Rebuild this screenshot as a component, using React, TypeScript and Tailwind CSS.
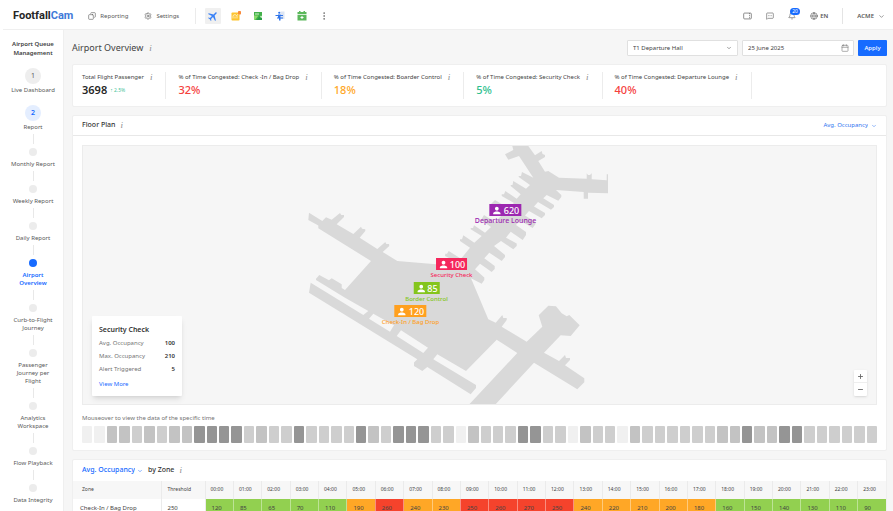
import React from "react";
import {
    Bell,
    Calendar,
    ChevronDown,
    Copy,
    Globe,
    MessageSquareMore,
    Minus,
    MoreVertical,
    Plus,
    Settings,
} from "lucide-react";
import { MdLocalAirport, MdPerson } from "react-icons/md";

const steps = [
    { label: "Monthly Report", width: "w-[60px]" },
    { label: "Weekly Report", width: "w-[60px]" },
    { label: "Daily Report", width: "w-[60px]" },
    { label: "Airport Overview", width: "w-[36px]" },
    { label: "Curb-to-Flight Journey", width: "w-[48px]" },
    { label: "Passenger Journey per Flight", width: "w-[36px]" },
    { label: "Analytics Workspace", width: "w-[44px]" },
    { label: "Flow Playback", width: "w-[60px]" },
    { label: "Data Integrity", width: "w-[60px]" },
];

const stats = [
    { label: "Total Flight Passenger", value: "3698", color: "text-[#262626] font-semibold", change: "2.5%" },
    { label: "% of Time Congested: Check -In / Bag Drop", value: "32%", color: "text-[#f5413d] font-medium" },
    { label: "% of Time Congested: Boarder Control", value: "18%", color: "text-[#ffa726] font-medium" },
    { label: "% of Time Congested: Security Check", value: "5%", color: "text-[#2fbf8f] font-medium" },
    { label: "% of Time Congested: Departure Lounge", value: "40%", color: "text-[#f5413d] font-medium" },
];

const slots = "aabbcbcbbddddcbccdccccdbcdddccabcccddccabccabccccccbbdbbddcccccc".split("");

const slotColor: Record<string, string> = {
    a: "bg-[#f0f0f0]",
    b: "bg-[#c3c3c3]",
    c: "bg-[#cecece]",
    d: "bg-[#959595]",
};

const occupancy = [
    120, 85, 65, 70, 110, 190, 260, 240, 230, 250, 260, 270, 250, 240, 220, 210, 200, 180, 160, 150, 140, 130, 110, 90,
];

function cellColor(value: number) {
    if (value >= 250) return "bg-[#f5432c]";
    if (value >= 180) return "bg-[#ffa726]";
    return "bg-[#92d050]";
}

function Info() {
    return <span className="font-['Liberation_Serif',serif] italic text-[9px] leading-none text-[#8c8c8c]">i</span>;
}

function TopBar() {
    return (
        <header className="ml-[3px] flex h-[30px] shrink-0 items-center border-b border-[#efefef] bg-white pl-[10px] pr-2 pt-[3px] text-[6px] text-[#595959]">
            <a href="#" className="font-[Roboto,sans-serif] text-[11px] font-bold text-[#262626]">
                Footfall<span className="text-[#3f7ad8]">Cam</span>
            </a>
            <nav className="flex items-center">
                <a href="#" className="ml-[15px] flex items-center gap-1">
                    <Copy className="size-2 -scale-x-100" strokeWidth={1.8} />
                    Reporting
                </a>
                <a href="#" className="ml-4 flex items-center gap-1">
                    <Settings className="size-2" strokeWidth={1.8} />
                    Settings
                </a>
            </nav>
            <div className="ml-4 h-4 w-px bg-[#ebebeb]" />
            <div className="ml-[9px] flex items-center gap-[12px]">
                <button aria-label="Airport" className="-mr-[2px] flex size-4 items-center justify-center rounded-[1px] bg-[#f0f0f0]">
                    <MdLocalAirport className="size-3 rotate-45 text-[#3b82f6]" />
                </button>
                <button aria-label="Analytics">
                    <svg viewBox="0 0 20 20" className="size-[10px]">
                        <rect x="1" y="3" width="16" height="16" rx="1.5" fill="#fdc42f" />
                        <path d="M4 15V9m4 6v-4m4 4V9M4 9l4-2 3 2 4-3" fill="none" stroke="#fff" strokeWidth="1.3" />
                        <rect x="14" y="0" width="6" height="7" rx="1.5" fill="#f98b3c" />
                    </svg>
                </button>
                <button aria-label="Map">
                    <svg viewBox="0 0 20 20" className="size-[10px]">
                        <path d="M2 2h16v16H2z" fill="#43b04b" />
                        <path d="M4 5h8v2H4z" fill="#d6f4cd" />
                        <path d="M2 9h9l-7 9H2z" fill="#8bdc6c" />
                        <path d="m7 18 6-7 5 4v3z" fill="#279e46" />
                        <path d="m14 12 2-3 2 2v3z" fill="#d6f4cd" />
                    </svg>
                </button>
                <button aria-label="Queue">
                    <svg viewBox="0 0 20 20" className="size-[10px]">
                        <path d="M11 1h8v15h-8z" fill="#dde5f3" />
                        <circle cx="8.500" cy="3.500" r="2.200" fill="#2f74ea" />
                        <path d="M1 8h5V7h5l1 1h4v2h-5v3h5v2h-5v4H8v-4H4v-2h2v-3H1z" fill="#2f74ea" />
                    </svg>
                </button>
                <button aria-label="Calendar">
                    <svg viewBox="0 0 20 20" className="size-[10px]">
                        <path d="M4 0h3v2h6V0h3v2h3v4H1V2h3zM1 7.500h18V19H1z" fill="#5cb85c" />
                        <path d="M9 10h2v2h2v2h-2v2H9v-2H7v-2h2z" fill="#fff" />
                    </svg>
                </button>
                <button aria-label="More">
                    <MoreVertical className="size-[10px]" strokeWidth={1.5} />
                </button>
            </div>
            <div className="ml-auto flex items-center gap-[14px]">
                <button aria-label="Layout">
                    <svg viewBox="0 0 20 16" className="h-2 w-[9px]" fill="none" stroke="currentColor" strokeWidth="1.500">
                        <rect x="1.500" y="1.500" width="17" height="13" rx="2" />
                        <path d="M14.500 1.500v13" strokeDasharray="2.500 2" />
                    </svg>
                </button>
                <button aria-label="Messages">
                    <MessageSquareMore className="size-2" strokeWidth={1.8} />
                </button>
                <button aria-label="Notifications" className="relative">
                    <Bell className="size-2" strokeWidth={1.8} />
                    <span className="absolute -top-1 left-[2px] rounded-full bg-[#176bff] px-[2px] text-[5px] leading-[7px] text-white">
                        20
                    </span>
                </button>
                <button className="flex items-center gap-[2px] font-semibold">
                    <Globe className="size-2" strokeWidth={1.8} />
                    EN
                </button>
                <div className="h-4 w-px bg-[#e4e4e4]" />
                <button className="flex items-center gap-1 font-semibold">
                    ACME
                    <ChevronDown className="size-[7px]" />
                </button>
            </div>
        </header>
    );
}

function Sidebar() {
    return (
        <aside className="w-[64px] shrink-0 border-r border-[#efefef] bg-white pl-[3px] pt-[10px] text-center text-[6px] leading-[8px] text-[#595959]">
            <h2 className="mx-auto w-[52px] font-semibold leading-[9px] text-[#404040]">Airport Queue Management</h2>
            <a href="#" className="mt-[10px] flex flex-col items-center gap-[2px] whitespace-nowrap">
                <span className="flex size-4 items-center justify-center rounded-full bg-[#eeeeee] text-[7px]">1</span>
                Live Dashboard
            </a>
            <a href="#" className="mt-[11px] flex flex-col items-center gap-[2px]">
                <span className="flex size-4 items-center justify-center rounded-full bg-[#e4eeff] text-[7px] font-semibold text-[#176bff]">
                    2
                </span>
                Report
            </a>
            {steps.map(({ label, width }) => {
                const active = label === "Airport Overview";
                return (
                    <a
                        key={label}
                        href="#"
                        className={`flex flex-col items-center pt-[3px] ${active ? "font-semibold text-[#176bff]" : ""}`}
                    >
                        <span className="h-[10px] w-px bg-[#e8e8e8]" />
                        <span className={`my-1 size-2 rounded-full ${active ? "bg-[#176bff]" : "bg-[#ececec]"}`} />
                        <span className={width}>{label}</span>
                    </a>
                );
            })}
        </aside>
    );
}

function Filters() {
    return (
        <div className="flex items-center">
            <h1 className="flex items-center gap-[6px] text-[9px] text-[#434343]">
                Airport Overview <Info />
            </h1>
            <div className="ml-auto flex items-center gap-1 text-[6px] text-[#434343]">
                <label className="relative flex items-center">
                    <select
                        aria-label="Hall"
                        className="h-4 w-[111px] appearance-none rounded-[1px] border border-[#e0e0e0] bg-white px-[5px] leading-none"
                    >
                        <option>T1 Departure Hall</option>
                    </select>
                    <ChevronDown className="pointer-events-none absolute right-[6px] size-[6px]" />
                </label>
                <label className="relative flex items-center">
                    <input
                        aria-label="Date"
                        type="text"
                        defaultValue="25 June 2025"
                        className="h-4 w-[112px] rounded-[1px] border border-[#e0e0e0] bg-white px-[5px]"
                    />
                    <Calendar className="pointer-events-none absolute right-[5px] size-2 text-[#7a7a7a]" strokeWidth={1.8} />
                </label>
                <button className="h-4 w-[29px] rounded-[1px] bg-[#176bff] font-medium text-white">Apply</button>
            </div>
        </div>
    );
}

function StatsCard() {
    return (
        <section className="flex rounded-[2px] border border-[#efefef] bg-white px-[9px] py-[7px]">
            {stats.map((stat) => (
                <div key={stat.label} className="mr-3 h-[27px] border-r border-[#ececec] pr-[13px]">
                    <div className="flex items-center gap-[6px] whitespace-nowrap text-[6px] leading-[10px] text-[#434343]">
                        {stat.label} <Info />
                    </div>
                    <div className={`flex items-center gap-[3px] text-[11px] leading-[16px] ${stat.color}`}>
                        {stat.value}
                        {stat.change && <span className="text-[5px] font-normal text-[#45c49a]">↑ {stat.change}</span>}
                    </div>
                </div>
            ))}
        </section>
    );
}

function Terminal() {
    return (
        <svg viewBox="305 145 350 260" className="h-[260px] w-[350px]" fill="#d9d9d9">
            <path
                fillRule="evenodd"
                d="M309 211.700 322.300 220 326 216.300 331.700 218.700 340 212 341.300 214H344V216L336.700 223.300 353.300 233 361 225.700 362 227.700 365.300 228.300V230L359.700 236.700 377.300 248 385.300 241 386.300 243H389L389.300 245 382.700 251 397.300 260 436 263.300 453 259 445 255 445.300 252.700H447L448.700 250 461 257.700 470 246.700 460 240V238.300H462L463.300 234.300 474.300 241.700 481.700 235 470.700 228.300V227H473L474 224.300 485 231.700 491 226 481 219 484 214 495 221 505 211 491 203 495 199 508 207 514 202 501.700 195V193.300H504L505.300 190 516.700 197.700 520.700 193.300 510.700 185V184H512.500L513.300 180 526 187.700 530 184 518.700 176V175H521L522 171 533.300 176.700 519 155 508.300 158.700 505 153.300 513.300 149 512.300 145H528.300L535 154.300 541.700 150 542.500 153 545 154V156L538.300 160 545 170.700 548.300 170 559 176.700 586.700 177.700V172.300L588 174H590L591.700 172.300V178.300L606.700 179.300V173.300H608V192.300L588 191.700V197.700H583.700V191L556 189 561.300 194V196L558.300 199.700 546.700 194 543.300 197.300 554 204V206L551 208.700 538 201 534 205.500 545 212V214L541.700 217.300 529 210 525 214.500 535.500 221V223L532.700 227 520 219.500 516 224 526 231V234L522.700 239 510.700 230.700 506 236.700 516.700 242.500V245L513.300 248.300 501 240 494 245 505 254V256L501.700 260 489.300 251.700 484.300 257.300 494.700 265V268L491.700 271 480 262.700 475 268.300 484.300 276.500V279L481.700 282.700 471 277.300 488.300 318.300 495.700 321.700 502.300 314 503.300 317H506.700V319L501.700 325.700 526.700 340.700 542.300 325.700 538.700 314.300 548.300 304.700 556 305.300 561.700 312.300 566.700 315.300 569.300 314 579.700 324.300 570.700 335 560.700 334.300 544 351.700 559 360 565 354 566 357H570V359L565 364.300 584.300 377.300V381.300L577.300 388.300 534 361.700 494 405H467.700L517.300 352 496.700 338.700 466 370 437.300 353.300 433.300 358.300 476 384V387L470.700 393.300 427.300 366 422.300 370 414 365V361.500L417.300 358.300 309 291.700 310.700 281.700 363.300 314 368.300 310 345 296.700 316 279V277.700L319.300 274 329 279.300 331.700 277.300 341.700 283.300V287L345 289 371 260 318.300 227.300V224.500L308.300 219ZM373.300 312.700 369 317.700 390 330.700 394 324.300ZM401 329.300 396.700 335 423.300 352 428 346.700Z"
            />
        </svg>
    );
}

type PinProps = { className: string; bg: string; text: string; count: number; label: string };

function Pin({ className, bg, text, count, label }: PinProps) {
    return (
        <div className={`absolute flex -translate-x-1/2 flex-col items-center whitespace-nowrap font-medium ${className}`}>
            <span className={`flex h-3 items-center gap-[1px] px-[2px] text-[9px] leading-none text-white ${bg}`}>
                <MdPerson className="size-[11px]" />
                {count}
            </span>
            <span className={`leading-[10px] ${text}`}>{label}</span>
        </div>
    );
}

function FloorPlan() {
    return (
        <section className="rounded-[2px] border border-[#efefef] bg-white">
            <div className="flex h-5 items-center justify-between border-b border-[#e8e8e8] px-[9px]">
                <h2 className="flex items-center gap-[5px] text-[7px] font-medium text-[#333333]">
                    Floor Plan <Info />
                </h2>
                <label className="flex items-center gap-[3px] text-[6px] text-[#2f74f0]">
                    <select aria-label="Metric" className="field-sizing-content appearance-none">
                        <option>Avg. Occupancy</option>
                    </select>
                    <ChevronDown className="size-[6px]" />
                </label>
            </div>
            <div className="px-[9px] pb-[7px] pt-[9px]">
                <div className="relative flex h-[260px] justify-center overflow-hidden border border-[#ececec] bg-[#f6f6f6]">
                    <div className="relative w-[350px] shrink-0">
                        <Terminal />
                        <Pin className="left-[201px] top-[58px] text-[7px]" bg="bg-[#9c27b0]" text="text-[#9c27b0]" count={620} label="Departure Lounge" />
                        <Pin className="left-[147px] top-[112px] text-[6px]" bg="bg-[#f5265c]" text="text-[#f5265c]" count={100} label="Security Check" />
                        <Pin className="left-[122px] top-[136px] text-[6px]" bg="bg-[#84c51c]" text="text-[#84c51c]" count={85} label="Border Control" />
                        <Pin className="left-[106px] top-[159px] text-[6px]" bg="bg-[#ffa01f]" text="text-[#ffa01f]" count={120} label="Check-In / Bag Drop" />
                    </div>
                    <div className="absolute bottom-2 left-[9px] w-[90px] rounded-[1px] bg-white px-[7px] pb-[5px] pt-[7px] text-[6px] leading-[13px] text-[#737373] shadow-md">
                        <h3 className="text-[7px] font-semibold text-[#333333]">Security Check</h3>
                        <dl className="mt-[1px]">
                            <div className="flex justify-between">
                                <dt>Avg. Occupancy</dt>
                                <dd className="font-semibold text-[#333333]">100</dd>
                            </div>
                            <div className="flex justify-between">
                                <dt>Max. Occupancy</dt>
                                <dd className="font-semibold text-[#333333]">210</dd>
                            </div>
                            <div className="flex justify-between">
                                <dt>Alert Triggered</dt>
                                <dd className="font-semibold text-[#333333]">5</dd>
                            </div>
                        </dl>
                        <a href="#" className="mt-[2px] block text-[#176bff]">
                            View More
                        </a>
                    </div>
                    <div className="absolute bottom-2 right-[9px] flex w-[13px] flex-col divide-y divide-[#eeeeee] rounded-[1px] bg-white text-[#666666] shadow">
                        <button aria-label="Zoom in" className="flex h-[13px] items-center justify-center">
                            <Plus className="size-[7px]" strokeWidth={3} />
                        </button>
                        <button aria-label="Zoom out" className="flex h-[13px] items-center justify-center">
                            <Minus className="size-[7px]" strokeWidth={3} />
                        </button>
                    </div>
                </div>
                <p className="mt-2 text-[6px] leading-[10px] text-[#737373]">Mouseover to view the data of the specific time</p>
                <div className="mt-[3px] flex gap-[2px]">
                    {slots.map((slot, i) => (
                        <div key={i} className={`h-[17px] flex-1 rounded-[1px] ${slotColor[slot]}`} />
                    ))}
                </div>
            </div>
        </section>
    );
}

function ZoneTable() {
    return (
        <section className="shrink-0 rounded-[2px] border border-[#efefef] bg-white">
            <div className="flex h-[21px] items-center gap-[5px] px-[9px] text-[7px] font-medium text-[#333333]">
                <label className="flex items-center gap-[2px] text-[#176bff]">
                    <select aria-label="Table metric" className="field-sizing-content appearance-none">
                        <option>Avg. Occupancy</option>
                    </select>
                    <ChevronDown className="size-[6px]" />
                </label>
                by Zone <Info />
            </div>
            <table className="w-full table-fixed border-collapse text-left text-[6px] text-[#434343]">
                <thead>
                    <tr className="h-[18px] bg-[#f7f7f7] text-[5px]">
                        <th className="w-[88px] border-r border-[#ebebeb] pl-[9px] font-normal">Zone</th>
                        <th className="w-[44px] border-r border-[#ebebeb] pl-[6px] font-normal">Threshold</th>
                        {occupancy.map((_, hour) => (
                            <th key={hour} className="border-r border-[#ebebeb] pl-[5px] font-normal last:border-r-0">
                                {String(hour).padStart(2, "0")}:00
                            </th>
                        ))}
                    </tr>
                </thead>
                <tbody>
                    <tr className="h-[18px]">
                        <td className="border-r border-[#ebebeb] pl-[7px]">Check-In / Bag Drop</td>
                        <td className="border-r border-[#ebebeb] pl-[6px]">250</td>
                        {occupancy.map((value, hour) => (
                            <td key={hour} className={`border-r border-white/40 pl-[6px] last:border-r-0 ${cellColor(value)}`}>
                                {value}
                            </td>
                        ))}
                    </tr>
                </tbody>
            </table>
        </section>
    );
}

const App: React.FC = () => {
    return (
        <div className="flex h-screen flex-col overflow-hidden bg-white font-['Noto_Sans','Open_Sans',sans-serif]">
            <TopBar />
            <div className="flex min-h-0 flex-1">
                <Sidebar />
                <main className="flex min-w-0 flex-1 flex-col gap-2 overflow-hidden bg-[#f6f6f6] pl-2 pr-[6px] pt-[10px]">
                    <Filters />
                    <StatsCard />
                    <FloorPlan />
                    <ZoneTable />
                </main>
            </div>
        </div>
    );
};

export default App;
